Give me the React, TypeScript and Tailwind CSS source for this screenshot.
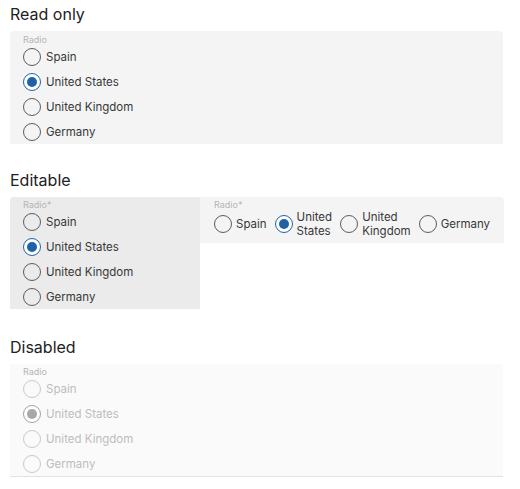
import React from "react";

const COUNTRIES = ["Spain", "United States", "United Kingdom", "Germany"];
const SELECTED = "United States";

type Tone = "normal" | "disabled";

function RadioDot({ checked, tone }: { checked: boolean; tone: Tone }) {
  const ring =
    tone === "disabled"
      ? checked
        ? "border-[#a3a3a3]"
        : "border-[#c9c9c9]"
      : checked
        ? "border-[#1f62a8]"
        : "border-[#5c5c5c]";
  const dot = tone === "disabled" ? "bg-[#a8a8a8]" : "bg-[#1f62a8]";
  return (
    <span
      className={`flex h-[18px] w-[18px] shrink-0 items-center justify-center rounded-full border ${ring} ${checked ? "bg-white" : ""}`}
    >
      {checked && <span className={`h-[10px] w-[10px] rounded-full ${dot}`} />}
    </span>
  );
}

function Option({
  label,
  tone = "normal",
  wrap = false,
}: {
  label: string;
  tone?: Tone;
  wrap?: boolean;
}) {
  const checked = label === SELECTED;
  return (
    <label className={`flex items-center ${wrap ? "gap-1" : "gap-[5px]"}`}>
      <RadioDot checked={checked} tone={tone} />
      <span
        className={`text-[11.5px] leading-[14px] ${wrap ? "w-min" : ""} ${tone === "disabled" ? "text-[#bdbdbd]" : "text-[#383838]"}`}
      >
        {label}
      </span>
    </label>
  );
}

function FieldLabel({ text }: { text: string }) {
  return (
    <div className="h-[8px] text-[9px] leading-[8px] text-[#b5b5b5]">{text}</div>
  );
}

function VerticalGroup({ label, tone = "normal" }: { label: string; tone?: Tone }) {
  return (
    <div className="flex flex-col">
      <FieldLabel text={label} />
      {COUNTRIES.map((c) => (
        <div key={c} className="flex h-[25px] items-center">
          <Option label={c} tone={tone} />
        </div>
      ))}
    </div>
  );
}

function Heading({ children }: { children: React.ReactNode }) {
  return (
    <h2 className="h-[31px] text-[16px] leading-[28px] font-normal text-[#222222]">
      {children}
    </h2>
  );
}

export default function App() {
  return (
    <div
      className="h-[489px] w-[520px] bg-white pl-[10px] pr-[17px]"
      style={{ fontFamily: "Inter, 'Noto Sans', sans-serif" }}
    >
      {/* Read only */}
      <section>
        <Heading>Read only</Heading>
        <div className="rounded-t-[4px] bg-[#f4f4f4] pl-[13px] pt-[5px]">
          <VerticalGroup label="Radio" />
        </div>
      </section>

      {/* Editable */}
      <section className="mt-[22px]">
        <Heading>Editable</Heading>
        <div className="flex items-start">
          <div className="w-[190px] shrink-0 rounded-tl-[4px] bg-[#ebebeb] pl-[13px] pt-[4px]">
            <VerticalGroup label="Radio*" />
          </div>
          <div className="flex-1 rounded-tr-[4px] bg-[#f4f4f4] px-[14px] pt-[4px] pb-[4px]">
            <FieldLabel text="Radio*" />
            <div className="flex h-[30px] items-center gap-2">
              {COUNTRIES.map((c) => (
                <Option key={c} label={c} wrap />
              ))}
            </div>
          </div>
        </div>
      </section>

      {/* Disabled */}
      <section className="mt-[24px]">
        <Heading>Disabled</Heading>
        <div className="border-b border-[#e2e2e2] bg-[#fafafa] pl-[13px] pt-[4px]">
          <VerticalGroup label="Radio" tone="disabled" />
        </div>
      </section>
    </div>
  );
}
